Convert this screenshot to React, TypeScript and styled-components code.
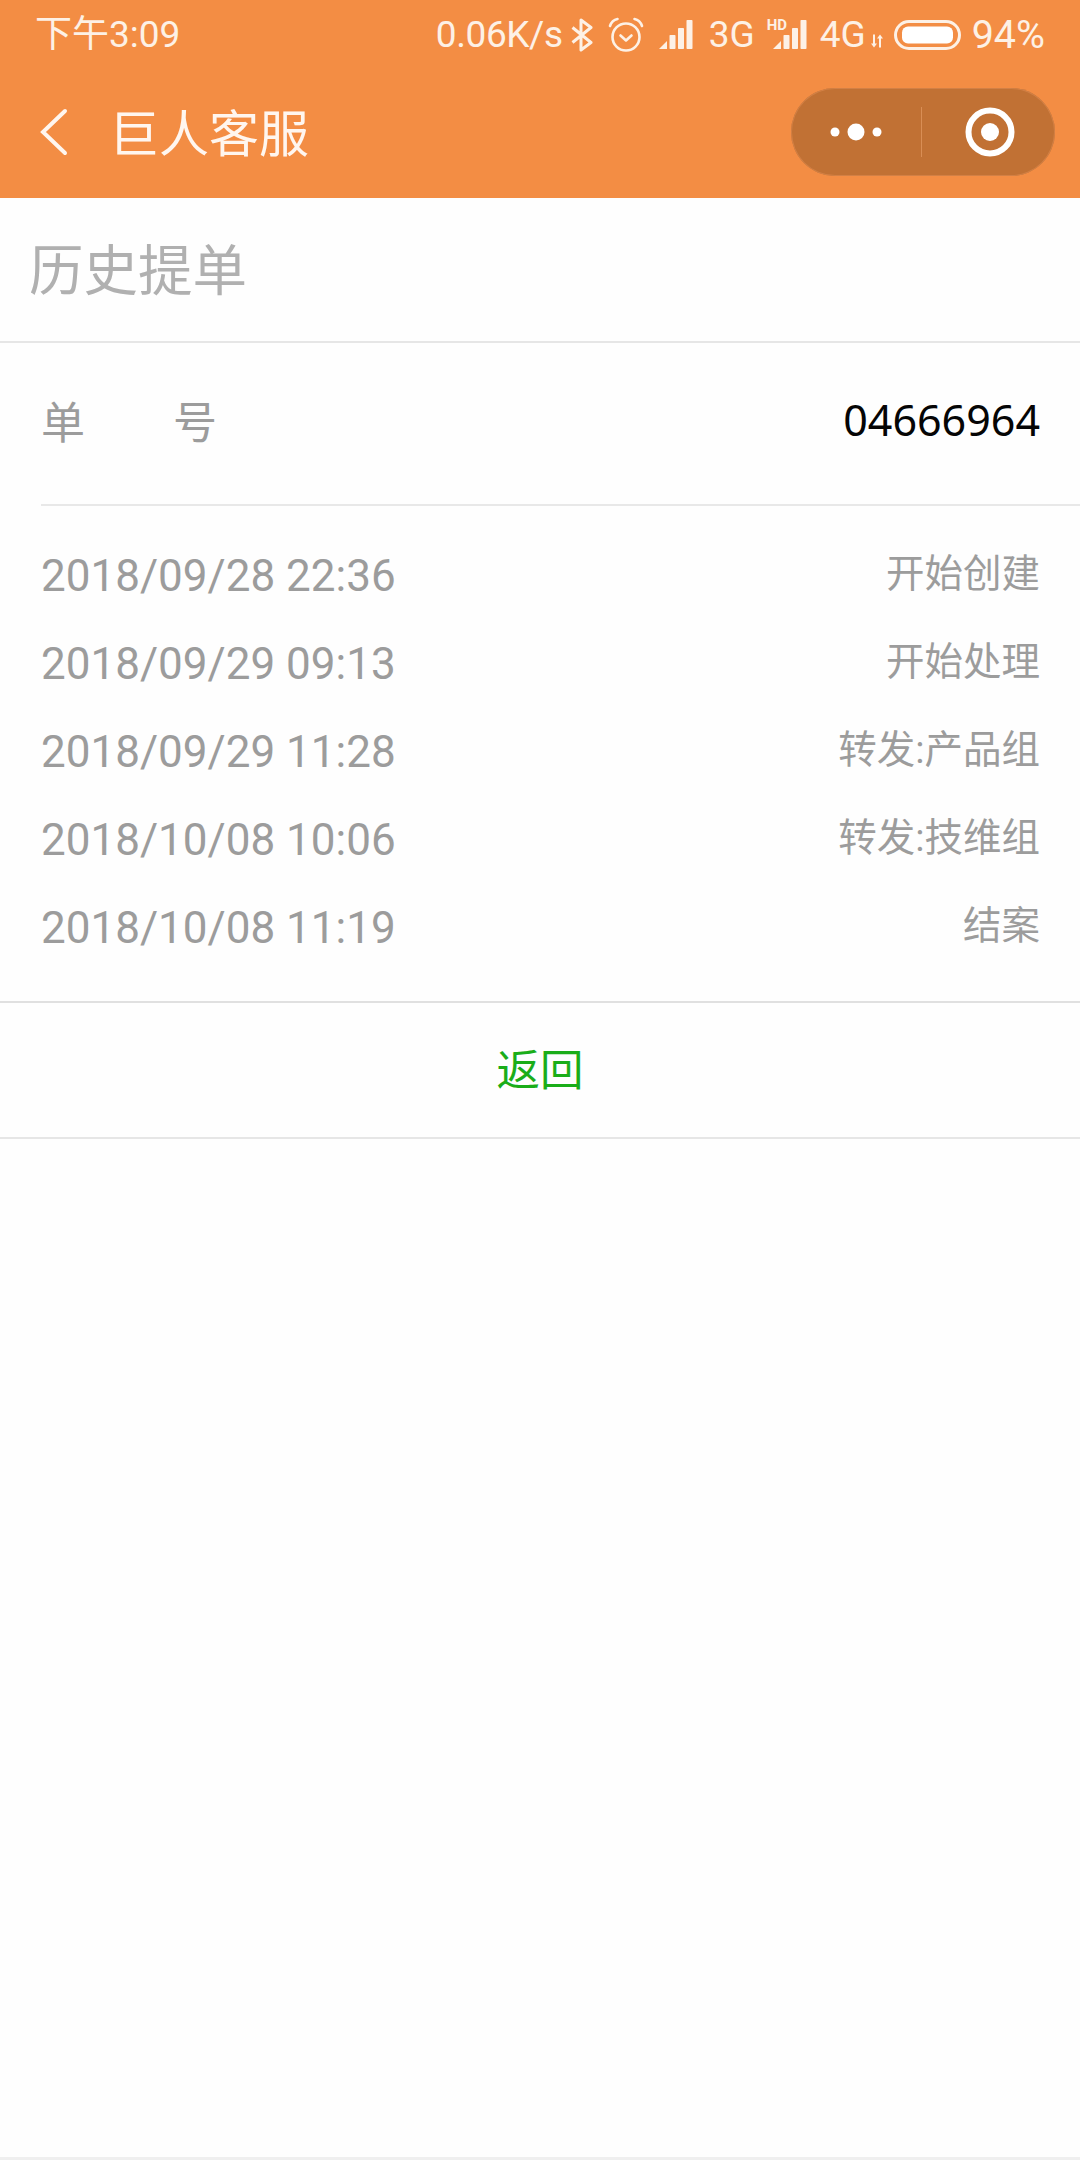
import React from "react";
import styled, { createGlobalStyle } from "styled-components";

const GlobalStyle = createGlobalStyle`
  html, body { margin: 0; padding: 0; background: #fefefe; }
  body { font-family: Roboto, "Noto Sans CJK SC", sans-serif; }
`;

const Page = styled.div`
  width: 1080px;
  height: 2160px;
  display: flex;
  flex-direction: column;
  background: #fefefe;
  overflow: hidden;
  font-family: Roboto, "Noto Sans CJK SC", sans-serif;
`;

const TopArea = styled.header`
  height: 198px;
  flex: none;
  background: #f38d44;
  color: #fdf1e6;
  display: flex;
  flex-direction: column;
`;

const StatusBar = styled.div`
  height: 70px;
  padding: 0 35px;
  display: flex;
  align-items: center;
  justify-content: space-between;
  font-size: 37px;
`;

const StatusGroup = styled.div`
  display: flex;
  align-items: center;
`;

const StatusText = styled.span<{ $gap?: number; $tight?: boolean }>`
  margin-left: ${(p) => p.$gap ?? 0}px;
  line-height: 40px;
  letter-spacing: ${(p) => (p.$tight ? "-0.4px" : "0")};
`;

const BatteryLevel = styled.span`
  margin-left: 11px;
  font-size: 39.5px;
  line-height: 40px;
`;

const StatusIcon = styled.svg<{ $gap: number; $drop?: number }>`
  display: block;
  flex: none;
  margin-left: ${(p) => p.$gap}px;
  margin-top: ${(p) => p.$drop ?? 0}px;
`;

const SignalSlot = styled.span<{ $gap: number }>`
  position: relative;
  display: block;
  flex: none;
  margin-left: ${(p) => p.$gap}px;
`;

const HdBadge = styled.span`
  position: absolute;
  left: -6px;
  top: -2px;
  font-size: 15px;
  line-height: 15px;
  font-weight: 700;
`;

const NavBar = styled.div`
  flex: 1;
  display: flex;
  align-items: center;
  padding: 0 25px 4px 40px;
  box-sizing: border-box;
`;

const BackChevron = styled.svg`
  display: block;
  flex: none;
`;

const NavTitle = styled.div`
  margin-left: 41px;
  padding-top: 5px;
  font-size: 50px;
  line-height: 60px;
  color: #fff6ef;
  flex: 1;
`;

const Capsule = styled.div`
  width: 264px;
  height: 88px;
  border-radius: 44px;
  background: #c17134;
  box-shadow: inset 0 0 0 1px #d28045;
  display: flex;
  align-items: center;
`;

const CapsuleSide = styled.div<{ $inset?: number }>`
  flex: 1;
  display: flex;
  align-items: center;
  justify-content: center;
  padding-left: ${(p) => p.$inset ?? 0}px;
`;

const CapsuleDivider = styled.div`
  width: 1px;
  height: 50px;
  background: #d98e55;
`;

const Heading = styled.div`
  height: 145px;
  flex: none;
  box-sizing: border-box;
  padding: 0 0 7px 29px;
  display: flex;
  align-items: center;
  font-size: 54.5px;
  color: #b0b0b0;
  border-bottom: 2px solid #e6e6e6;
`;

const TicketRow = styled.div`
  height: 163px;
  flex: none;
  margin-left: 41px;
  box-sizing: border-box;
  padding: 0 40px 8px 0;
  border-bottom: 2px solid #e8e8e8;
  display: flex;
  align-items: center;
  justify-content: space-between;
`;

const TicketLabel = styled.div`
  width: 176px;
  display: flex;
  justify-content: space-between;
  font-size: 44px;
  color: #9c9c9c;
`;

const TicketNumber = styled.div`
  font-family: "Noto Sans", Roboto, sans-serif;
  font-size: 43px;
  color: #050505;
`;

const History = styled.div`
  height: 497px;
  flex: none;
  box-sizing: border-box;
  padding: 26px 40px 0 41px;
  border-bottom: 2px solid #e0e0e0;
`;

const HistoryRow = styled.div`
  height: 88px;
  display: flex;
  align-items: center;
  justify-content: space-between;
  color: #9c9c9c;
`;

const HistoryTime = styled.span`
  font-size: 44px;
`;

const HistoryStatus = styled.span`
  font-size: 38.5px;
  padding-bottom: 12px;
`;

const BackButton = styled.div`
  height: 136px;
  flex: none;
  box-sizing: border-box;
  padding-bottom: 5px;
  display: flex;
  align-items: center;
  justify-content: center;
  font-size: 43.5px;
  color: #1aad19;
  border-bottom: 2px solid #e6e6e6;
`;

const Filler = styled.div`
  flex: 1;
  border-bottom: 3px solid #efefef;
`;

const records = [
  ["2018/09/28 22:36", "开始创建"],
  ["2018/09/29 09:13", "开始处理"],
  ["2018/09/29 11:28", "转发:产品组"],
  ["2018/10/08 10:06", "转发:技维组"],
  ["2018/10/08 11:19", "结案"],
];

/* Four rising bars, the first one cut to a wedge. */
const SignalBars = () => (
  <svg width="34" height="30" viewBox="0 0 34 30" fill="currentColor" style={{ display: "block" }}>
    <path d="M0 29 L8 21 V29 Z" />
    <rect x="10.5" y="15" width="6" height="14" rx="0.8" />
    <rect x="19" y="8" width="6" height="21" rx="0.8" />
    <rect x="27.5" y="0" width="6" height="29" rx="0.8" />
  </svg>
);

export default function App() {
  return (
    <Page>
      <GlobalStyle />
      <TopArea>
        <StatusBar>
          <StatusText>下午3:09</StatusText>
          <StatusGroup>
            <StatusText $tight>0.06K/s</StatusText>
            <StatusIcon $gap={8} width="22" height="34" viewBox="0 0 22 34" fill="none" stroke="currentColor" strokeWidth="3" strokeLinejoin="round">
              <path d="M1.5 9.5 L20 24.5 L10 32 V2 L20 9.5 L1.5 24.5" />
            </StatusIcon>
            <StatusIcon $gap={15} width="36" height="36" viewBox="0 0 36 36" fill="none" stroke="currentColor" strokeWidth="2.6" strokeLinecap="round" strokeLinejoin="round">
              <circle cx="18" cy="20" r="13.5" />
              <path d="M12.5 18.5 L18 23.5 L23.5 18.5" />
              <path d="M2 9 Q4 3 9.5 2 M34 9 Q32 3 26.5 2" />
            </StatusIcon>
            <SignalSlot $gap={15}><SignalBars /></SignalSlot>
            <StatusText $gap={16}>3G</StatusText>
            <SignalSlot $gap={18}>
              <HdBadge>HD</HdBadge>
              <SignalBars />
            </SignalSlot>
            <StatusText $gap={13}>4G</StatusText>
            <StatusIcon $gap={5} $drop={12} width="12" height="14" viewBox="0 0 12 13" fill="currentColor">
              <path d="M3 0 H5 V9 H7 L4 13 L1 9 H3 Z" transform="translate(-1 0)" />
              <path d="M8 13 H10 V4 H12 L9 0 L6 4 H8 Z" />
            </StatusIcon>
            <StatusIcon $gap={11} width="67" height="30" viewBox="0 0 67 30" fill="none">
              <rect x="1.5" y="1.5" width="64" height="27" rx="13.5" stroke="currentColor" strokeWidth="3" />
              <rect x="8" y="6.5" width="51" height="17" rx="6" fill="#fff" />
            </StatusIcon>
            <BatteryLevel>94%</BatteryLevel>
          </StatusGroup>
        </StatusBar>
        <NavBar>
          <BackChevron width="28" height="48" viewBox="0 0 28 48" fill="none" stroke="#fff6ef" strokeWidth="4" strokeLinecap="round">
            <path d="M25 3 L3 24 L25 45" />
          </BackChevron>
          <NavTitle>巨人客服</NavTitle>
          <Capsule>
            <CapsuleSide>
              <svg width="52" height="20" viewBox="0 0 52 20" fill="#fff">
                <circle cx="5" cy="10" r="4.5" />
                <circle cx="26" cy="10" r="8.5" />
                <circle cx="47" cy="10" r="4.5" />
              </svg>
            </CapsuleSide>
            <CapsuleDivider />
            <CapsuleSide $inset={3}>
              <svg width="50" height="50" viewBox="0 0 50 50" fill="none">
                <circle cx="25" cy="25" r="21.5" stroke="#fff" strokeWidth="6" />
                <circle cx="25" cy="25" r="9" fill="#fff" />
              </svg>
            </CapsuleSide>
          </Capsule>
        </NavBar>
      </TopArea>
      <Heading>历史提单</Heading>
      <TicketRow>
        <TicketLabel>
          <span>单</span>
          <span>号</span>
        </TicketLabel>
        <TicketNumber>04666964</TicketNumber>
      </TicketRow>
      <History>
        {records.map(([time, status]) => (
          <HistoryRow key={time}>
            <HistoryTime>{time}</HistoryTime>
            <HistoryStatus>{status}</HistoryStatus>
          </HistoryRow>
        ))}
      </History>
      <BackButton>返回</BackButton>
      <Filler />
    </Page>
  );
}
